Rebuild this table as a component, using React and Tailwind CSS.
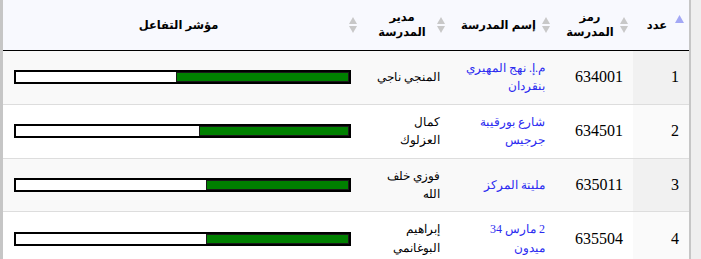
import React from 'react';

const schools = [
  { id: 1, code: '634001', name: 'م.إ. نهج المهيري بنقردان', director: 'المنجي ناجي', score: 52 },
  { id: 2, code: '634501', name: 'شارع بورقيبة جرجيس', director: 'كمال العزلوك', score: 45 },
  { id: 3, code: '635011', name: 'مليتة المركز', director: 'فوزي خلف الله', score: 43 },
  { id: 4, code: '635504', name: '2 مارس 34 ميدون', director: 'إبراهيم البوغانمي', score: 43 },
];

function SortIcon({ active }) {
  if (active) {
    return (
      <svg className="absolute right-[5px] top-[15px]" width="9" height="8" viewBox="0 0 9 8">
        <path d="M4.5 0 L9 8 L0 8 Z" fill="#a3a8f5" />
      </svg>
    );
  }
  return (
    <svg className="absolute right-[5px] top-[17px]" width="8" height="16" viewBox="0 0 8 16">
      <path d="M4 0 L8 7 L0 7 Z" fill="#c8c8c8" />
      <path d="M0 9 L8 9 L4 16 Z" fill="#c8c8c8" />
    </svg>
  );
}

function Th({ children, active }) {
  return (
    <th className="relative pt-[10px] pb-[10px] pr-[18px] pl-[10px] text-center align-middle font-bold text-[11.5px] leading-[15px]">
      {children}
      <SortIcon active={active} />
    </th>
  );
}

function ScoreBar({ value }) {
  return (
    <div className="flex justify-start h-[14px] border-2 border-black bg-white">
      <div className="h-full bg-[#008000] border border-[#1a1a1a]" style={{ width: `${value}%` }} />
    </div>
  );
}

export default function App() {
  return (
    <div className="flex w-[701px] h-[259px] overflow-hidden bg-white">
      <div className="w-[3px] bg-[#c6c6c6]" />
      <table
        dir="rtl"
        className="w-[686px] table-fixed border-collapse text-[16px] leading-[18.4px] text-black"
        style={{ fontFamily: '"Liberation Serif", "DejaVu Serif", serif' }}
      >
        <colgroup>
          <col className="w-[56px]" />
          <col className="w-[78px]" />
          <col className="w-[105px]" />
          <col className="w-[88px]" />
          <col />
        </colgroup>
        <thead
          className="bg-[#f8f9fe]"
          style={{ fontFamily: '"Liberation Sans", "DejaVu Sans", sans-serif' }}
        >
          <tr className="h-[50px] border-b border-black">
            <Th active>عدد</Th>
            <Th>رمز المدرسة</Th>
            <Th>إسم المدرسة</Th>
            <Th>مدير المدرسة</Th>
            <Th>مؤشر التفاعل</Th>
          </tr>
        </thead>
        <tbody>
          {schools.map((s, i) => (
            <tr
              key={s.id}
              className={`h-[53px] border-t border-[#dddddd] first:border-t-0 ${i % 2 === 0 ? 'bg-[#f9f9f9]' : 'bg-white'}`}
            >
              <td className={`px-[10px] py-[8px] ${i % 2 === 0 ? 'bg-[#f1f1f1]' : 'bg-[#fafafa]'}`}>{s.id}</td>
              <td className="px-[10px] py-[8px]">{s.code}</td>
              <td className="px-[10px] py-[8px] text-[12px] leading-[18.4px] text-[#2b2bf0]">{s.name}</td>
              <td className="px-[10px] py-[8px] text-[12px] leading-[18.4px]">{s.director}</td>
              <td className="px-[11px] py-[8px]">
                <ScoreBar value={s.score} />
              </td>
            </tr>
          ))}
        </tbody>
      </table>
      <div className="w-[2px] bg-[#c6c6c6]" />
      <div className="flex-1 bg-[#efefef]" />
    </div>
  );
}
